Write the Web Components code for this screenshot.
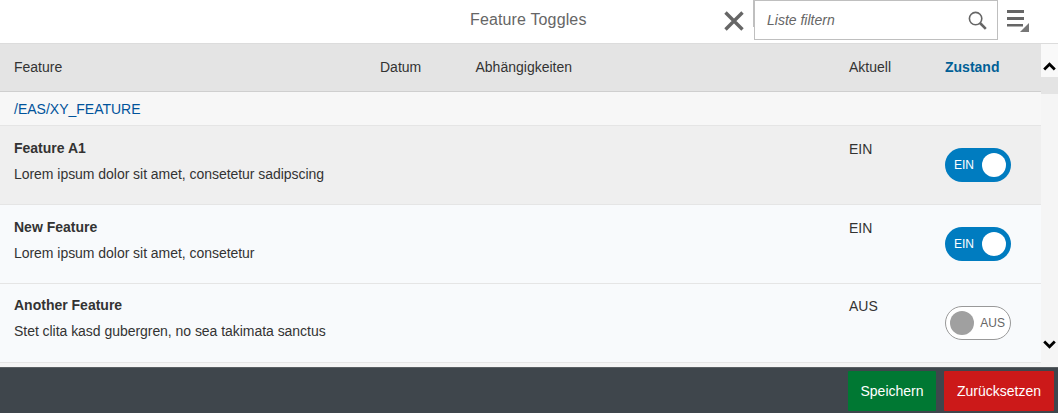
<!DOCTYPE html>
<html><head><meta charset="utf-8"><style>
html,body{margin:0;padding:0;background:#fff}
body{width:1058px;height:413px;overflow:hidden;font-family:"Liberation Sans",Arial,sans-serif;font-size:14px;color:#333}
</style></head><body>
<toggle-app>
  <feature-row name="Feature A1" desc="Lorem ipsum dolor sit amet, consetetur sadipscing" state="EIN" selected></feature-row>
  <feature-row name="New Feature" desc="Lorem ipsum dolor sit amet, consetetur" state="EIN"></feature-row>
  <feature-row name="Another Feature" desc="Stet clita kasd gubergren, no sea takimata sanctus" state="AUS" compact></feature-row>
</toggle-app>
<script>
class FeatureSwitch extends HTMLElement{
  constructor(){super();this.attachShadow({mode:'open'})}
  connectedCallback(){
    const on=this.getAttribute('state')==='EIN';
    this.shadowRoot.innerHTML=`<style>
    :host{display:block;width:66px;height:34px;box-sizing:border-box;border-radius:17px;font-size:12px;line-height:12px}
    .w{display:flex;align-items:center;height:100%;box-sizing:border-box}
    .on{background:#007cc0;color:#fff;padding:0 5px 0 9px;justify-content:space-between;border-radius:17px}
    .off{background:#fff;border:1px solid #999;color:#666;padding:0 5px 0 4px;justify-content:space-between;border-radius:17px}
    i{display:block;width:24px;height:24px;border-radius:50%;background:${on?'#fff':'#a0a0a0'}}
    </style><div class="w ${on?'on':'off'}">${on?`<span>EIN</span><i></i>`:`<i></i><span>AUS</span>`}</div>`;
  }
}
customElements.define('feature-switch',FeatureSwitch);

class FeatureRow extends HTMLElement{
  constructor(){super();this.attachShadow({mode:'open'})}
  connectedCallback(){
    const a=n=>this.getAttribute(n);
    this.shadowRoot.innerHTML=`<style>
    :host{display:grid;grid-template-columns:849px 96px 1fr;height:79px;box-sizing:border-box;border-bottom:1px solid #e5e5e5;background:#f8fafc;color:#333}
    :host([selected]){background:#efefef}
    .m{padding:14px 0 0 14px}
    b{display:block;font-size:14px;line-height:17px;font-weight:700}
    p{margin:9px 0 0;line-height:17px;letter-spacing:-.04px}
    .c{padding-top:15px;line-height:17px}
    :host([compact]) .m{padding-top:13px}
    :host([compact]) .c{padding-top:14px}
    feature-switch{margin-top:22px}
    </style><div class="m"><b>${a('name')}</b><p>${a('desc')}</p></div><div class="c">${a('state')}</div><div><feature-switch state="${a('state')}"></feature-switch></div>`;
  }
}
customElements.define('feature-row',FeatureRow);

class ToggleApp extends HTMLElement{
  constructor(){super();this.attachShadow({mode:'open'})}
  connectedCallback(){
    this.shadowRoot.innerHTML=`<style>
    :host{display:flex;flex-direction:column;width:1058px;height:413px}
    header{display:flex;height:44px;box-sizing:border-box;border-bottom:1px solid #dcdcdc;background:#fff;flex:none}
    .title{width:720px;padding-left:470px;box-sizing:border-box;font-size:16px;line-height:40px;color:#666;letter-spacing:.14px}
    .x{width:27px;display:flex;align-items:flex-start;justify-content:center;height:40px;padding:11px 0 0;box-sizing:border-box}
    .tick{width:7px;height:27px;box-sizing:border-box;border-right:1px solid #bfbfbf;flex:none}
    .search{width:244px;height:40px;box-sizing:border-box;border:1px solid #bfbfbf;display:flex;align-items:center;justify-content:space-between;padding:0 10px 0 12px;font-style:italic;color:#666}
    .menu{margin-left:9px;margin-top:9px;height:26px}
    .body{flex:1;display:flex;min-height:0}
    .main{width:1041px;display:flex;flex-direction:column;background:#f5f5f5}
    .cols{display:grid;grid-template-columns:380px 95.5px 373.5px 96px 1fr;height:48px;align-items:center;box-sizing:border-box;background:#e4e4e4;border-bottom:1px solid #cfcfcf;padding-bottom:2px}
    .cols span:first-child{padding-left:14px}
    .cols .z{font-weight:700;color:#005f96;font-size:14px}
    .group{height:34px;line-height:35px;padding-left:14px;box-sizing:border-box;background:#f7f7f7;border-bottom:1px solid #e5e5e5;color:#00539b}
    .sb{width:17px;background:#f5f5f5;display:flex;flex-direction:column;position:relative}
    .sb .up{height:33px;background:#f9f9f9;display:flex;justify-content:center;align-items:flex-end;padding-bottom:6px;box-sizing:border-box}
    .sb .th{height:17px;background:#e4e4e4}
    .sb .dn{position:absolute;left:0;top:294px;width:17px;height:13px;display:flex;justify-content:center;align-items:center}
    footer{height:46px;flex:none;background:#3f464c;display:flex;justify-content:flex-end;align-items:center;gap:8px;padding-right:4px;border-top:1px solid #5a5f63;box-sizing:border-box}
    button{all:unset;height:40px;box-sizing:border-box;color:#fff;font:14px/40px "Liberation Sans",Arial,sans-serif;text-align:center;border-radius:1px}
    .s{width:88px;background:#007833}.r{width:110px;background:#cc1919}
    </style>
    <header>
      <div class="title">Feature Toggles</div>
      <div class="x"><svg width="20" height="20" viewBox="0 0 20 20"><path d="M1.5 1.5 L18.5 18.5 M18.5 1.5 L1.5 18.5" stroke="#666" stroke-width="3.4" fill="none"/></svg></div>
      <div class="tick"></div>
      <div class="search"><span>Liste filtern</span>
        <svg width="19" height="19" viewBox="0 0 19 19"><circle cx="7.6" cy="7.6" r="6.2" fill="none" stroke="#666" stroke-width="1.6"/><path d="M12 12 L17.8 17.8" stroke="#666" stroke-width="2.6"/></svg></div>
      <div class="menu"><svg width="24" height="24" viewBox="0 0 24 24"><path d="M0 1h17v3H0zM0 8h17v3H0zM0 15h16v2.5H0z" fill="#666"/><path d="M22 14v9H13z" fill="#777"/></svg></div>
    </header>
    <div class="body">
      <div class="main">
        <div class="cols"><span>Feature</span><span>Datum</span><span>Abhängigkeiten</span><span>Aktuell</span><span class="z">Zustand</span></div>
        <div class="group">/EAS/XY_FEATURE</div>
        <slot></slot>
      </div>
      <div class="sb"><div class="up"><svg width="13" height="9" viewBox="0 0 13 9"><path d="M1.2 7.4 L6.5 2.2 L11.8 7.4" stroke="#000" stroke-width="2.8" fill="none"/></svg></div><div class="th"></div>
      <div class="dn"><svg width="13" height="9" viewBox="0 0 13 9"><path d="M1.2 1.6 L6.5 6.8 L11.8 1.6" stroke="#000" stroke-width="2.8" fill="none"/></svg></div></div>
    </div>
    <footer><button class="s">Speichern</button><button class="r">Zurücksetzen</button></footer>`;
  }
}
customElements.define('toggle-app',ToggleApp);
</script>
</body></html>
